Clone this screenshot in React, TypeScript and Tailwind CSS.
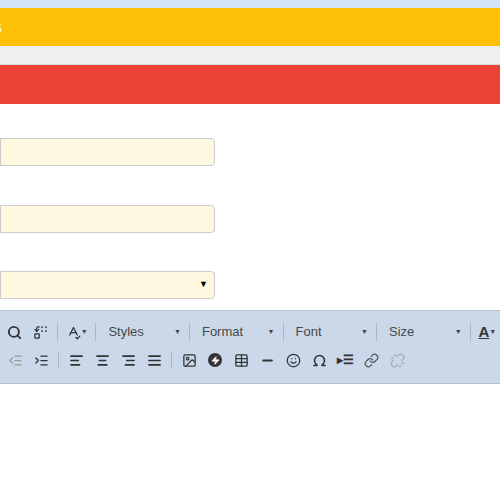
import React from "react";
import { Search, Replace, SpellCheck, AlignLeft, AlignCenter, AlignRight, AlignJustify, Image, Table, Minus, Smile, Omega, Link, Unlink, IndentDecrease, IndentIncrease, Zap } from "lucide-react";

const Sep = () => <div className="w-px h-[18px] bg-[#a9b6c6] mx-[4px]" />;
const Caret = () => <span className="text-[7px] text-[#444]">▼</span>;
const Btn = ({ children, w = 26 }: { children: React.ReactNode; w?: number }) => (
  <div className="flex items-center justify-center h-[24px]" style={{ width: w }}>{children}</div>
);
const Combo = ({ label, w }: { label: string; w: number }) => (
  <div className="flex items-center justify-between pl-[8px] pr-[4px] h-[24px] text-[13px] text-[#484848]" style={{ width: w }}>
    <span>{label}</span><Caret />
  </div>
);
const ic = "w-[15px] h-[15px] text-[#333]";

export default function App() {
  return (
    <div className="w-[500px] h-[500px] bg-white overflow-hidden" style={{ fontFamily: "Arial, 'Liberation Sans', sans-serif" }}>
      <div className="h-[8px] bg-[#d5e4f8]" />
      <div className="h-[38px] bg-[#ffc107] flex items-center"><span className="text-white font-bold text-[18px] -ml-[8px]">s</span></div>
      <div className="h-[19px] bg-[#efefef] border-b border-[#d8d8d8]" />
      <div className="h-[39px] bg-[#ea4335]" />
      <div className="h-[34px]" />
      <div className="w-[215px] h-[28px] bg-[#fff8e1] border border-[#ccc] rounded-r-[4px]" />
      <div className="h-[39px]" />
      <div className="w-[215px] h-[28px] bg-[#fff8e1] border border-[#ccc] rounded-r-[4px]" />
      <div className="h-[38px]" />
      <div className="w-[215px] h-[28px] bg-[#fff8e1] border border-[#ccc] rounded-r-[4px] flex items-center justify-end pr-[6px]"><span className="text-[9px]">▼</span></div>
      <div className="h-[11px]" />
      <div className="h-[74px] bg-[#cad8ea] border-t border-b border-[#b6c1cf] flex flex-col pt-[7px] pl-[2px]">
        <div className="flex items-center h-[28px]">
          <Btn><Search className={ic} strokeWidth={3} /></Btn>
          <Btn><Replace className={ic} /></Btn>
          <Sep />
          <Btn w={30}><SpellCheck className={ic} /><Caret /></Btn>
          <Sep />
          <Combo label="Styles" w={86} />
          <Sep />
          <Combo label="Format" w={86} />
          <Sep />
          <Combo label="Font" w={86} />
          <Sep />
          <Combo label="Size" w={86} />
          <Sep />
          <Btn><span className="font-bold text-[15px] text-[#333] underline">A</span><Caret /></Btn>
        </div>
        <div className="flex items-center h-[28px]">
          <Btn><IndentDecrease className="w-[15px] h-[15px] text-[#999]" /></Btn>
          <Btn><IndentIncrease className={ic} /></Btn>
          <Sep />
          <Btn><AlignLeft className={ic} strokeWidth={2.5} /></Btn>
          <Btn><AlignCenter className={ic} strokeWidth={2.5} /></Btn>
          <Btn><AlignRight className={ic} strokeWidth={2.5} /></Btn>
          <Btn><AlignJustify className={ic} strokeWidth={2.5} /></Btn>
          <Sep />
          <Btn><Image className={ic} /></Btn>
          <Btn><div className="w-[14px] h-[14px] rounded-full bg-[#333] flex items-center justify-center"><Zap className="w-[9px] h-[9px] text-white" fill="white" /></div></Btn>
          <Btn><Table className={ic} /></Btn>
          <Btn><Minus className={ic} strokeWidth={3} /></Btn>
          <Btn><Smile className={ic} /></Btn>
          <Btn><Omega className={ic} strokeWidth={2.5} /></Btn>
          <Btn><span className="text-[12px] font-bold text-[#333]">▸☰</span></Btn>
          <Btn><Link className="w-[15px] h-[15px] text-[#555]" /></Btn>
          <Btn><Unlink className="w-[15px] h-[15px] text-[#aaa]" /></Btn>
        </div>
      </div>
    </div>
  );
}
